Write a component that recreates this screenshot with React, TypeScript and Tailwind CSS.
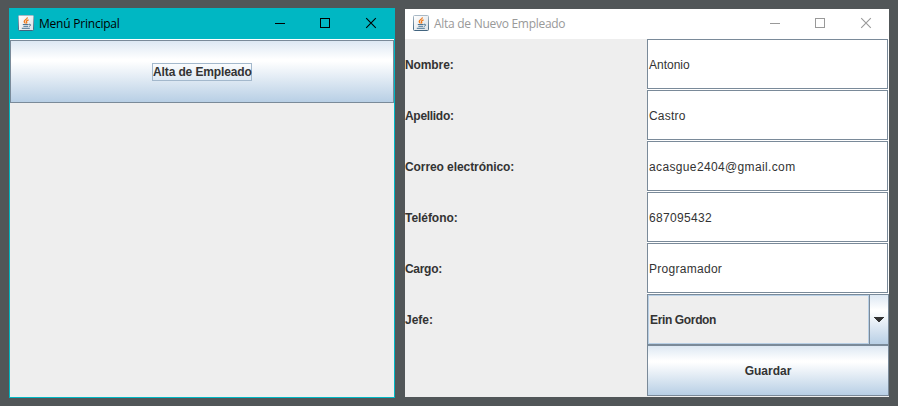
import React from "react";

const metal = "bg-[linear-gradient(to_bottom,#dde8f3_0%,#ffffff_30%,#ffffff_33%,#b8cfe5_100%)]";

function JavaIcon() {
  return (
    <svg width="16" height="16" viewBox="0 0 16 16" className="mb-0.5 shrink-0">
      <defs>
        <linearGradient id="jb" x1="0" y1="0" x2="1" y2="1">
          <stop offset="0" stopColor="#ffffff" />
          <stop offset="1" stopColor="#dce1e6" />
        </linearGradient>
        <linearGradient id="jf" x1="0" y1="0" x2="0" y2="1">
          <stop offset="0" stopColor="#a9b9c6" />
          <stop offset="1" stopColor="#42647f" />
        </linearGradient>
      </defs>
      <rect x="0.5" y="0.5" width="15" height="15" rx="1" fill="url(#jb)" stroke="url(#jf)" />
      <path d="M9.4 2.4C9.6 4.2 6 4.8 6.2 6.6c.1.8.9 1.3 1.3 1.9M10.6 4.8C8.2 5.7 8 6.5 8.6 7.2c.4.5.1 1-.2 1.3" fill="none" stroke="#f07818" strokeWidth="1.3" />
      <path d="M4.8 9.5h5.8M5.4 11.3h4.8M10.9 9.3c2.3-.5 2.3 1.5.1 2.1M3.8 13.3h8" fill="none" stroke="#4a7594" strokeWidth="1" />
    </svg>
  );
}

function WindowControls() {
  return (
    <div className="ml-auto flex items-center">
      <svg width="46" height="30" viewBox="0 0 46 30" shapeRendering="crispEdges" stroke="currentColor" fill="none">
        <path d="M19 14.5h10" />
      </svg>
      <svg width="46" height="30" viewBox="0 0 46 30" shapeRendering="crispEdges" stroke="currentColor" fill="none">
        <rect x="18.5" y="9.5" width="9" height="9" />
      </svg>
      <svg width="46" height="30" viewBox="0 0 46 30" stroke="currentColor" fill="none">
        <path d="M18.2 9.2l9.6 9.6M27.8 9.2l-9.6 9.6" strokeWidth="1.1" />
      </svg>
    </div>
  );
}

const fields = [
  { label: "Nombre:", value: "Antonio", labelClass: "tracking-[-0.1px]", valueClass: "tracking-normal" },
  { label: "Apellido:", value: "Castro", labelClass: "tracking-[-0.3px]", valueClass: "tracking-[0.2px]" },
  { label: "Correo electrónico:", value: "acasgue2404@gmail.com", labelClass: "tracking-[-0.08px]", valueClass: "tracking-[0.36px]" },
  { label: "Teléfono:", value: "687095432", labelClass: "tracking-[-0.05px]", valueClass: "tracking-[0.33px]" },
  { label: "Cargo:", value: "Programador", labelClass: "tracking-[-0.3px]", valueClass: "tracking-[0.28px]" },
];

function Label({ text, className = "" }: { text: string; className?: string }) {
  return <div className={`flex w-[242px] shrink-0 items-center font-bold whitespace-nowrap ${className}`}>{text}</div>;
}

export default function App() {
  return (
    <div className="flex h-[406px] w-[898px] items-start gap-[10px] overflow-hidden bg-[#515658] pt-2 pl-[9px] font-['Liberation_Sans',Arial,sans-serif] text-[12px] leading-[14px] text-[#333333]">
      <section className="flex h-[390px] w-[386px] flex-col border border-[#00b7c3] bg-[#eeeeee]">
        <header className="flex h-[30px] shrink-0 items-center bg-[#00b7c3] pl-2 text-black">
          <JavaIcon />
          <span className="ml-[5px] font-['Open_Sans','Noto_Sans',sans-serif] text-[12px] tracking-[-0.22px] whitespace-nowrap">Menú Principal</span>
          <WindowControls />
        </header>
        <div className="h-px shrink-0 bg-white" />
        <button className={`flex h-[63px] shrink-0 items-center justify-center border border-[#7a8a99] ${metal}`}>
          <span className="flex h-[18px] w-[100px] items-center border border-[#a3b8cc] font-bold tracking-[-0.12px] whitespace-nowrap">Alta de Empleado</span>
        </button>
      </section>

      <section className="mt-px flex h-[388px] w-[484px] flex-col bg-[#eeeeee]">
        <header className="flex h-[30px] shrink-0 items-center bg-white pl-2 text-[#999999]">
          <JavaIcon />
          <span className="ml-[5px] font-['Open_Sans','Noto_Sans',sans-serif] text-[12px] tracking-[-0.28px] whitespace-nowrap">Alta de Nuevo Empleado</span>
          <WindowControls />
        </header>
        {fields.map((f) => (
          <div key={f.label} className="flex h-[51px] shrink-0">
            <Label text={f.label} className={f.labelClass} />
            <div className="flex flex-1 bg-white pr-px pb-px">
              <div className={`flex flex-1 items-center border border-[#7a8a99] pt-px pl-px whitespace-nowrap ${f.valueClass}`}>{f.value}</div>
            </div>
          </div>
        ))}
        <div className="flex h-[51px] shrink-0">
          <Label text="Jefe:" />
          <div className="flex flex-1 border border-[#7a8a99]">
            <div className="flex flex-1 items-center border border-[#b8cfe5] pl-px font-bold tracking-[-0.36px]">Erin Gordon</div>
            <div className={`flex w-[19px] items-center justify-center border-l border-[#7a8a99] ${metal}`}>
              <svg width="10" height="5" viewBox="0 0 10 5" shapeRendering="crispEdges" fill="#333333">
                <path d="M0 0h10v1H9v1H8v1H7v1H6v1H4V4H3V3H2V2H1V1H0z" />
              </svg>
            </div>
          </div>
        </div>
        <div className="flex h-[51px] shrink-0">
          <div className="w-[242px] shrink-0" />
          <button className={`flex flex-1 items-center justify-center border border-[#7a8a99] font-bold ${metal}`}>Guardar</button>
        </div>
      </section>
    </div>
  );
}
